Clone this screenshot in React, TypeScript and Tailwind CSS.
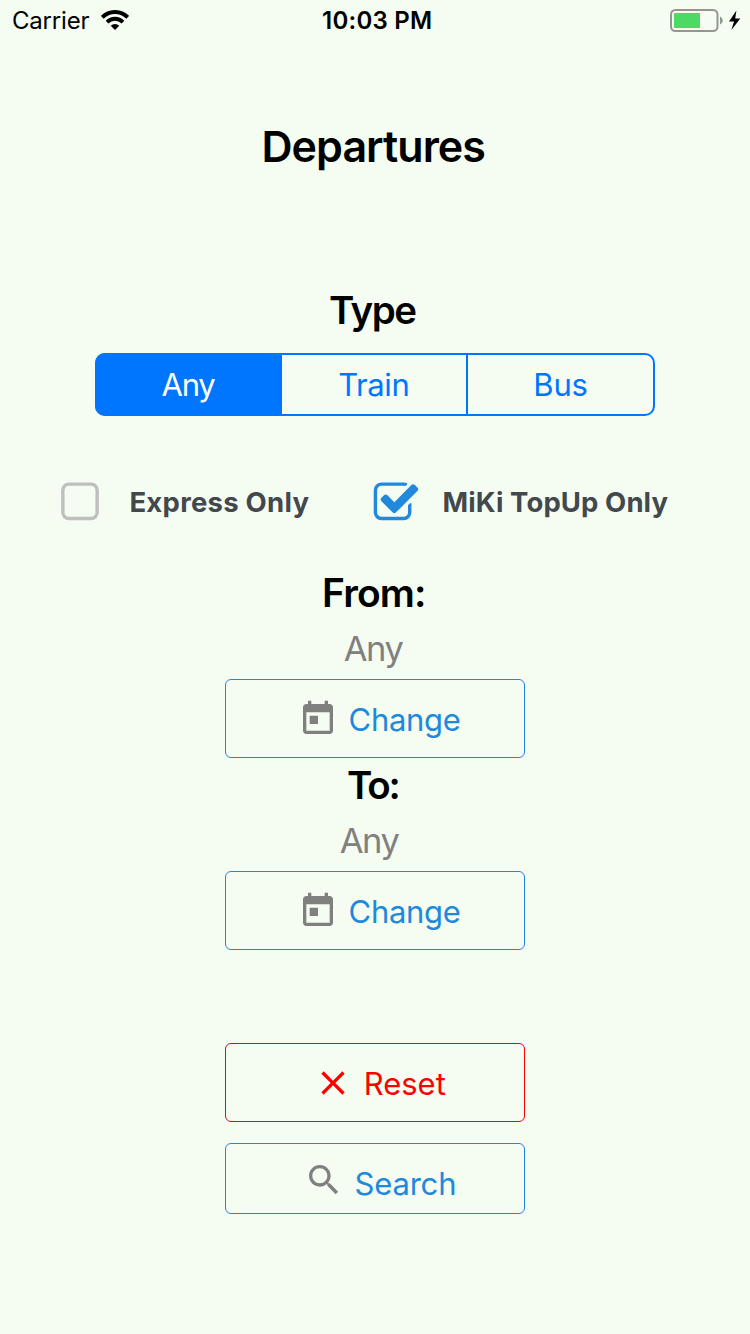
import React from "react";

function WifiIcon() {
  return (
    <svg className="-mt-px h-5 w-7 shrink-0" viewBox="0 0 28 20">
      <path d="M1.27 7.27a18 18 0 0 1 25.46 0" fill="none" stroke="#000" strokeWidth="4" />
      <path d="M6.05 12.05a11.25 11.25 0 0 1 15.9 0" fill="none" stroke="#000" strokeWidth="3.8" />
      <path d="M14 20 9.76 15.76a6 6 0 0 1 8.48 0z" />
    </svg>
  );
}

function BatteryIcon() {
  return (
    <svg className="h-[41px] w-20 shrink-0" viewBox="0 0 80 41">
      <rect x="1" y="10" width="46.5" height="21" rx="4.5" fill="none" stroke="#92978f" strokeWidth="2" />
      <rect x="4" y="13" width="26" height="15" rx="0.8" fill="#4cd964" />
      <path d="M50 16.5c3.6 1.6 3.6 6.4 0 8z" fill="#92978f" />
      <path d="M66.4 10.6 59 21.6h5L61.4 30 70.3 18.4h-5.1z" />
    </svg>
  );
}

function CalendarIcon() {
  return (
    <svg className="mt-[19px] size-10 shrink-0 fill-[#808080]" viewBox="0 0 24 24">
      <path d="M19 3h-1V1h-2v2H8V1H6v2H5c-1.11 0-1.99.9-1.99 2L3 19c0 1.1.89 2 2 2h14c1.1 0 2-.9 2-2V5c0-1.1-.9-2-2-2zm0 16H5V8h14v11zM7 10h5v5H7z" />
    </svg>
  );
}

function UncheckedIcon() {
  return (
    <svg className="size-12 shrink-0 fill-[#bfbfbf]" viewBox="0 0 1792 1792">
      <path d="M1312 256h-832q-66 0-113 47t-47 113v832q0 66 47 113t113 47h832q66 0 113-47t47-113v-832q0-66-47-113t-113-47zm288 160v832q0 119-84.5 203.5t-203.5 84.5h-832q-119 0-203.5-84.5t-84.5-203.5v-832q0-119 84.5-203.5t203.5-84.5h832q119 0 203.5 84.5t84.5 203.5z" />
    </svg>
  );
}

function CheckedIcon() {
  return (
    <svg className="size-12 shrink-0 fill-[#2089dc]" viewBox="0 0 1792 1792">
      <path d="M1472 930v318q0 119-84.5 203.5t-203.5 84.5h-832q-119 0-203.5-84.5t-84.5-203.5v-832q0-119 84.5-203.5t203.5-84.5h832q63 0 117 25 15 7 18 23 3 17-9 29l-49 49q-10 10-23 10-3 0-9-2-23-6-45-6h-832q-66 0-113 47t-47 113v832q0 66 47 113t113 47h832q66 0 113-47t47-113v-254q0-13 9-22l64-64q10-10 23-10 6 0 12 3 20 8 20 29zm231-489l-814 814q-24 24-57 24t-57-24l-430-430q-24-24-24-57t24-57l110-110q24-24 57-24t57 24l263 263 647-647q24-24 57-24t57 24l110 110q24 24 24 57t-24 57z" />
    </svg>
  );
}

function ChangeButton() {
  return (
    <button className="ml-[225px] flex h-[79px] w-[300px] rounded-md border border-[#2089dc] pl-[72px] text-left text-[#2089dc]">
      <CalendarIcon />
      <span className="ml-[10.6px] text-[31px] leading-[80px] tracking-[-0.3px]">Change</span>
    </button>
  );
}

export default function App() {
  return (
    <div className="flex h-[1334px] w-[750px] flex-col overflow-hidden bg-[#f5fdf2] font-['Inter',sans-serif] whitespace-nowrap text-black">
      <header className="flex h-[41px] shrink-0 items-center pl-3">
        <span className="w-[89px] text-2xl leading-[41px] tracking-[-0.2px]">Carrier</span>
        <WifiIcon />
        <span className="ml-[193px] w-[348px] text-2xl leading-[41px] font-semibold tracking-[0.25px]">10:03 PM</span>
        <BatteryIcon />
      </header>

      <h1 className="mt-[75px] pl-[261.5px] text-[43px] leading-[60px] font-semibold tracking-[-0.95px]">Departures</h1>

      <h2 className="mt-[109px] pl-[329px] text-[38.5px] leading-[50px] font-semibold tracking-[-1.5px]">Type</h2>
      <div className="mt-[18px] ml-[95px] flex h-[63px] w-[560px] shrink-0 rounded-[10px] border-2 border-[#0076ff] text-[31px] leading-[60px] text-[#0076ff]">
        <button className="-my-0.5 -ml-0.5 w-[187px] rounded-l-[10px] bg-[#0076ff] pl-[66.5px] text-left text-[31px] tracking-[-1.2px] text-white">Any</button>
        <button className="w-[184px] pl-[56.2px] text-left tracking-[-0.4px]">Train</button>
        <button className="w-[187px] border-l-2 border-[#0076ff] pl-[65.3px] text-left tracking-[-0.2px]">Bus</button>
      </div>

      <div className="mt-[63px] flex h-12 shrink-0 pl-14 text-[27.5px] leading-[46px] font-bold text-[#43484d]">
        <label className="flex w-[316.3px]">
          <UncheckedIcon />
          <span className="ml-[25.4px] tracking-[0.25px]">Express Only</span>
        </label>
        <label className="flex">
          <CheckedIcon />
          <span className="ml-[22.3px] tracking-[0.1px]">MiKi TopUp Only</span>
        </label>
      </div>

      <h2 className="mt-[41px] pl-[322px] text-[39px] leading-[50px] font-semibold tracking-[-0.88px]">From:</h2>
      <p className="pl-[343.7px] text-[34.5px] leading-[61px] tracking-[-1.4px] text-[#808080]">Any</p>
      <ChangeButton />

      <h2 className="pl-[347px] text-[38.5px] leading-[54px] font-semibold tracking-[-2.2px]">To:</h2>
      <p className="pb-0.5 pl-[339.7px] text-[34.5px] leading-[57px] tracking-[-1.4px] text-[#808080]">Any</p>
      <ChangeButton />

      <button className="mt-[93px] ml-[225px] flex h-[79px] w-[300px] rounded-md border border-[#ff0000] pl-[87px] text-left text-[#ff0000]">
        <svg className="mt-[19px] size-10 shrink-0 fill-current" viewBox="0 0 24 24">
          <path d="M19 6.41 17.59 5 12 10.59 6.41 5 5 6.41 10.59 12 5 17.59 6.41 19 12 13.41 17.59 19 19 17.59 13.41 12z" />
        </svg>
        <span className="ml-[10.7px] text-[31px] leading-[80px]">Reset</span>
      </button>
      <button className="mt-[21px] ml-[225px] flex h-[71px] w-[300px] rounded-md border border-[#2089dc] pl-[78px] text-left text-[#2089dc]">
        <svg className="mt-4 size-10 shrink-0 fill-[#808080]" viewBox="0 0 24 24">
          <path d="M15.5 14h-.79l-.28-.27C15.41 12.59 16 11.11 16 9.5 16 5.91 13.09 3 9.5 3S3 5.91 3 9.5 5.91 16 9.5 16c1.61 0 3.09-.59 4.23-1.57l.27.28v.79l5 4.99L20.49 19l-4.99-5zm-6 0C7.01 14 5 11.99 5 9.5S7.01 5 9.5 5 14 7.01 14 9.5 11.99 14 9.5 14z" />
        </svg>
        <span className="ml-[10.6px] text-[31px] leading-[80px] tracking-[-0.2px]">Search</span>
      </button>
    </div>
  );
}
